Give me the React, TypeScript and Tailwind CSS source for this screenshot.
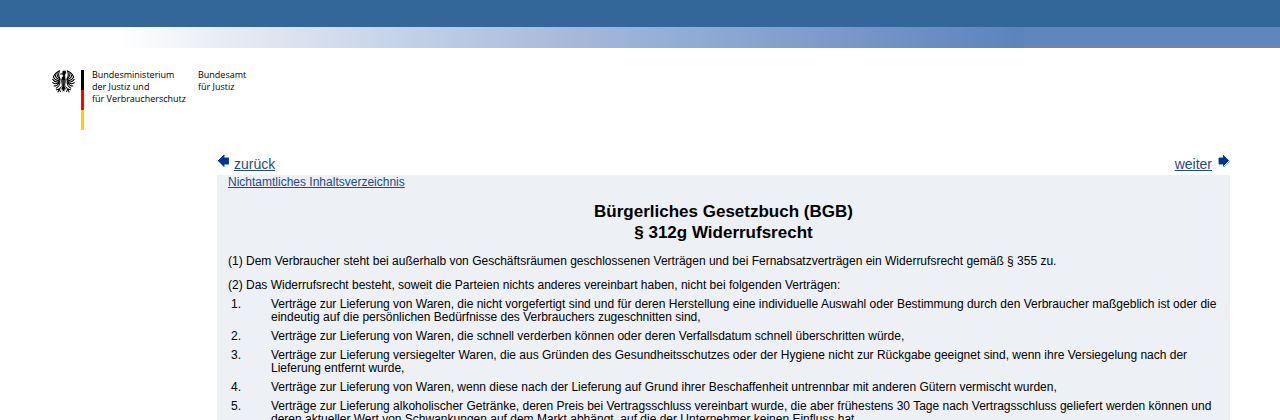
import { useId } from 'react';

const items = [
  'Verträge zur Lieferung von Waren, die nicht vorgefertigt sind und für deren Herstellung eine individuelle Auswahl oder Bestimmung durch den Verbraucher maßgeblich ist oder die eindeutig auf die persönlichen Bedürfnisse des Verbrauchers zugeschnitten sind,',
  'Verträge zur Lieferung von Waren, die schnell verderben können oder deren Verfallsdatum schnell überschritten würde,',
  'Verträge zur Lieferung versiegelter Waren, die aus Gründen des Gesundheitsschutzes oder der Hygiene nicht zur Rückgabe geeignet sind, wenn ihre Versiegelung nach der Lieferung entfernt wurde,',
  'Verträge zur Lieferung von Waren, wenn diese nach der Lieferung auf Grund ihrer Beschaffenheit untrennbar mit anderen Gütern vermischt wurden,',
  'Verträge zur Lieferung alkoholischer Getränke, deren Preis bei Vertragsschluss vereinbart wurde, die aber frühestens 30 Tage nach Vertragsschluss geliefert werden können und deren aktueller Wert von Schwankungen auf dem Markt abhängt, auf die der Unternehmer keinen Einfluss hat,',
];

function EagleWing() {
  return (
    <g fill="none" stroke="#000" strokeWidth="3" strokeLinecap="round">
      <path d="M29 28C20 28 17 14 21 3C12 7 6 14 4 21" />
      <path d="M22 24C16 20 14 13 15 8" />
      <path d="M23 28C15 26 10 19 9 14" />
      <path d="M24 31C14 31 6 26 4 19" />
      <path d="M22 33C13 36 6 33 2 27" />
      <path d="M21 34C15 40 8 41 2 36" />
      <path d="M21 35C18 42 13 46 6 46" />
      <path d="M23 35C22 43 18 49 12 52" />
      <path d="M30 44L22 54L13 57M22 54L17 63M22 54L24 62" />
    </g>
  );
}

function Eagle() {
  const titleId = useId();
  return (
    <svg
      viewBox="0 0 66 66"
      className="w-[23px] h-[23px] shrink-0"
      role="img"
      aria-labelledby={titleId}
    >
      <title id={titleId}>Bundesadler</title>
      <EagleWing />
      <g transform="matrix(-1 0 0 1 66 0)">
        <EagleWing />
      </g>
      <path
        fill="#000"
        stroke="#fff"
        strokeWidth="2"
        d="M21 10L29 8C28 4 31 1 35 1C41 1 43 7 40 11C38 14 38 17 39 22C42 30 40 40 37 46L42 58L37 56L36 65L33 60L30 65L29 56L24 58L29 46C26 40 24 30 27 22C30 18 32 17 30 14L23 14Z"
      />
      <path stroke="#fff" strokeWidth="1" d="M26 12L31 11M31 28V42M35 28V42" />
    </svg>
  );
}

function Arrow({ flip = false }: { flip?: boolean }) {
  return (
    <svg
      viewBox="0 0 12 13"
      className={
        flip ? 'mt-px w-3 h-[13px] -scale-x-100' : 'mt-px w-3 h-[13px]'
      }
      shapeRendering="crispEdges"
      aria-hidden="true"
    >
      <path
        fill="#003399"
        stroke="#006680"
        strokeWidth="0.5"
        d="M1 6.5L7 0.5V3.5H11.5V10H7V12.5Z"
      />
    </svg>
  );
}

function Logo() {
  return (
    <div className="flex pl-[52px] pt-[22px] font-['Open_Sans',sans-serif] text-[9px] leading-3 text-black">
      <Eagle />
      <div className="ml-[6px] w-[3px] h-[60px] flex flex-col">
        <span className="flex-1 bg-black" />
        <span className="flex-1 bg-[#ff0000]" />
        <span className="flex-1 bg-[#ffcc00]" />
      </div>
      <p className="ml-2 -mt-px">
        Bundesministerium
        <br />
        der Justiz und
        <br />
        für Verbraucherschutz
      </p>
      <p className="ml-3 -mt-px">
        Bundesamt
        <br />
        für Justiz
      </p>
    </div>
  );
}

export default function App() {
  return (
    <div className="h-screen overflow-hidden bg-white font-['Liberation_Sans',Arial,sans-serif] text-black">
      <header>
        <div className="h-[27px] bg-[#336699]" />
        <div className="h-[21px] flex">
          <div className="w-[1024px] bg-[linear-gradient(to_right,#fff_120px,#f4f6f9_170px,#e8ecf5_220px,#dfe5f0_275px,#c4d2e8_400px,#a6b8da_575px,#92add5_680px,#7c9ac9_830px,#6b8dc3_930px,#5b84bc_1023px)]" />
          <div className="flex-1 bg-[#5f87bd] border-b-2 border-[#6d84ab]" />
        </div>
        <Logo />
      </header>

      <main className="ml-[217px] mr-[50px] mt-[23px]">
        <nav className="flex justify-between text-sm leading-[22px] text-[#1f4a86]">
          <a href="#zurueck" className="flex gap-[5px]">
            <Arrow />
            <span className="underline">zurück</span>
          </a>
          <a href="#weiter" className="flex gap-[6px]">
            <span className="underline">weiter</span>
            <Arrow flip />
          </a>
        </nav>

        <article className="bg-[#edf0f5] px-[11px] pt-px text-xs leading-[13px]">
          <a
            href="#inhalt"
            className="inline-block text-[#1f4a86] underline"
          >
            Nichtamtliches Inhaltsverzeichnis
          </a>
          <h1 className="mt-3 text-center text-[17px] leading-[21px] font-bold">
            Bürgerliches Gesetzbuch (BGB)
            <br />§ 312g Widerrufsrecht
          </h1>
          <p className="mt-3">
            (1) Dem Verbraucher steht bei außerhalb von Geschäftsräumen
            geschlossenen Verträgen und bei Fernabsatzverträgen ein
            Widerrufsrecht gemäß § 355 zu.
          </p>
          <p className="mt-[11px]">
            (2) Das Widerrufsrecht besteht, soweit die Parteien nichts anderes
            vereinbart haben, nicht bei folgenden Verträgen:
          </p>
          <ol className="mt-[6px] pl-[3px] flex flex-col gap-[6px]">
            {items.map((text, idx) => (
              <li key={idx} className="flex">
                <span className="w-10 shrink-0">{idx + 1}.</span>
                <span>{text}</span>
              </li>
            ))}
          </ol>
        </article>
      </main>
    </div>
  );
}
